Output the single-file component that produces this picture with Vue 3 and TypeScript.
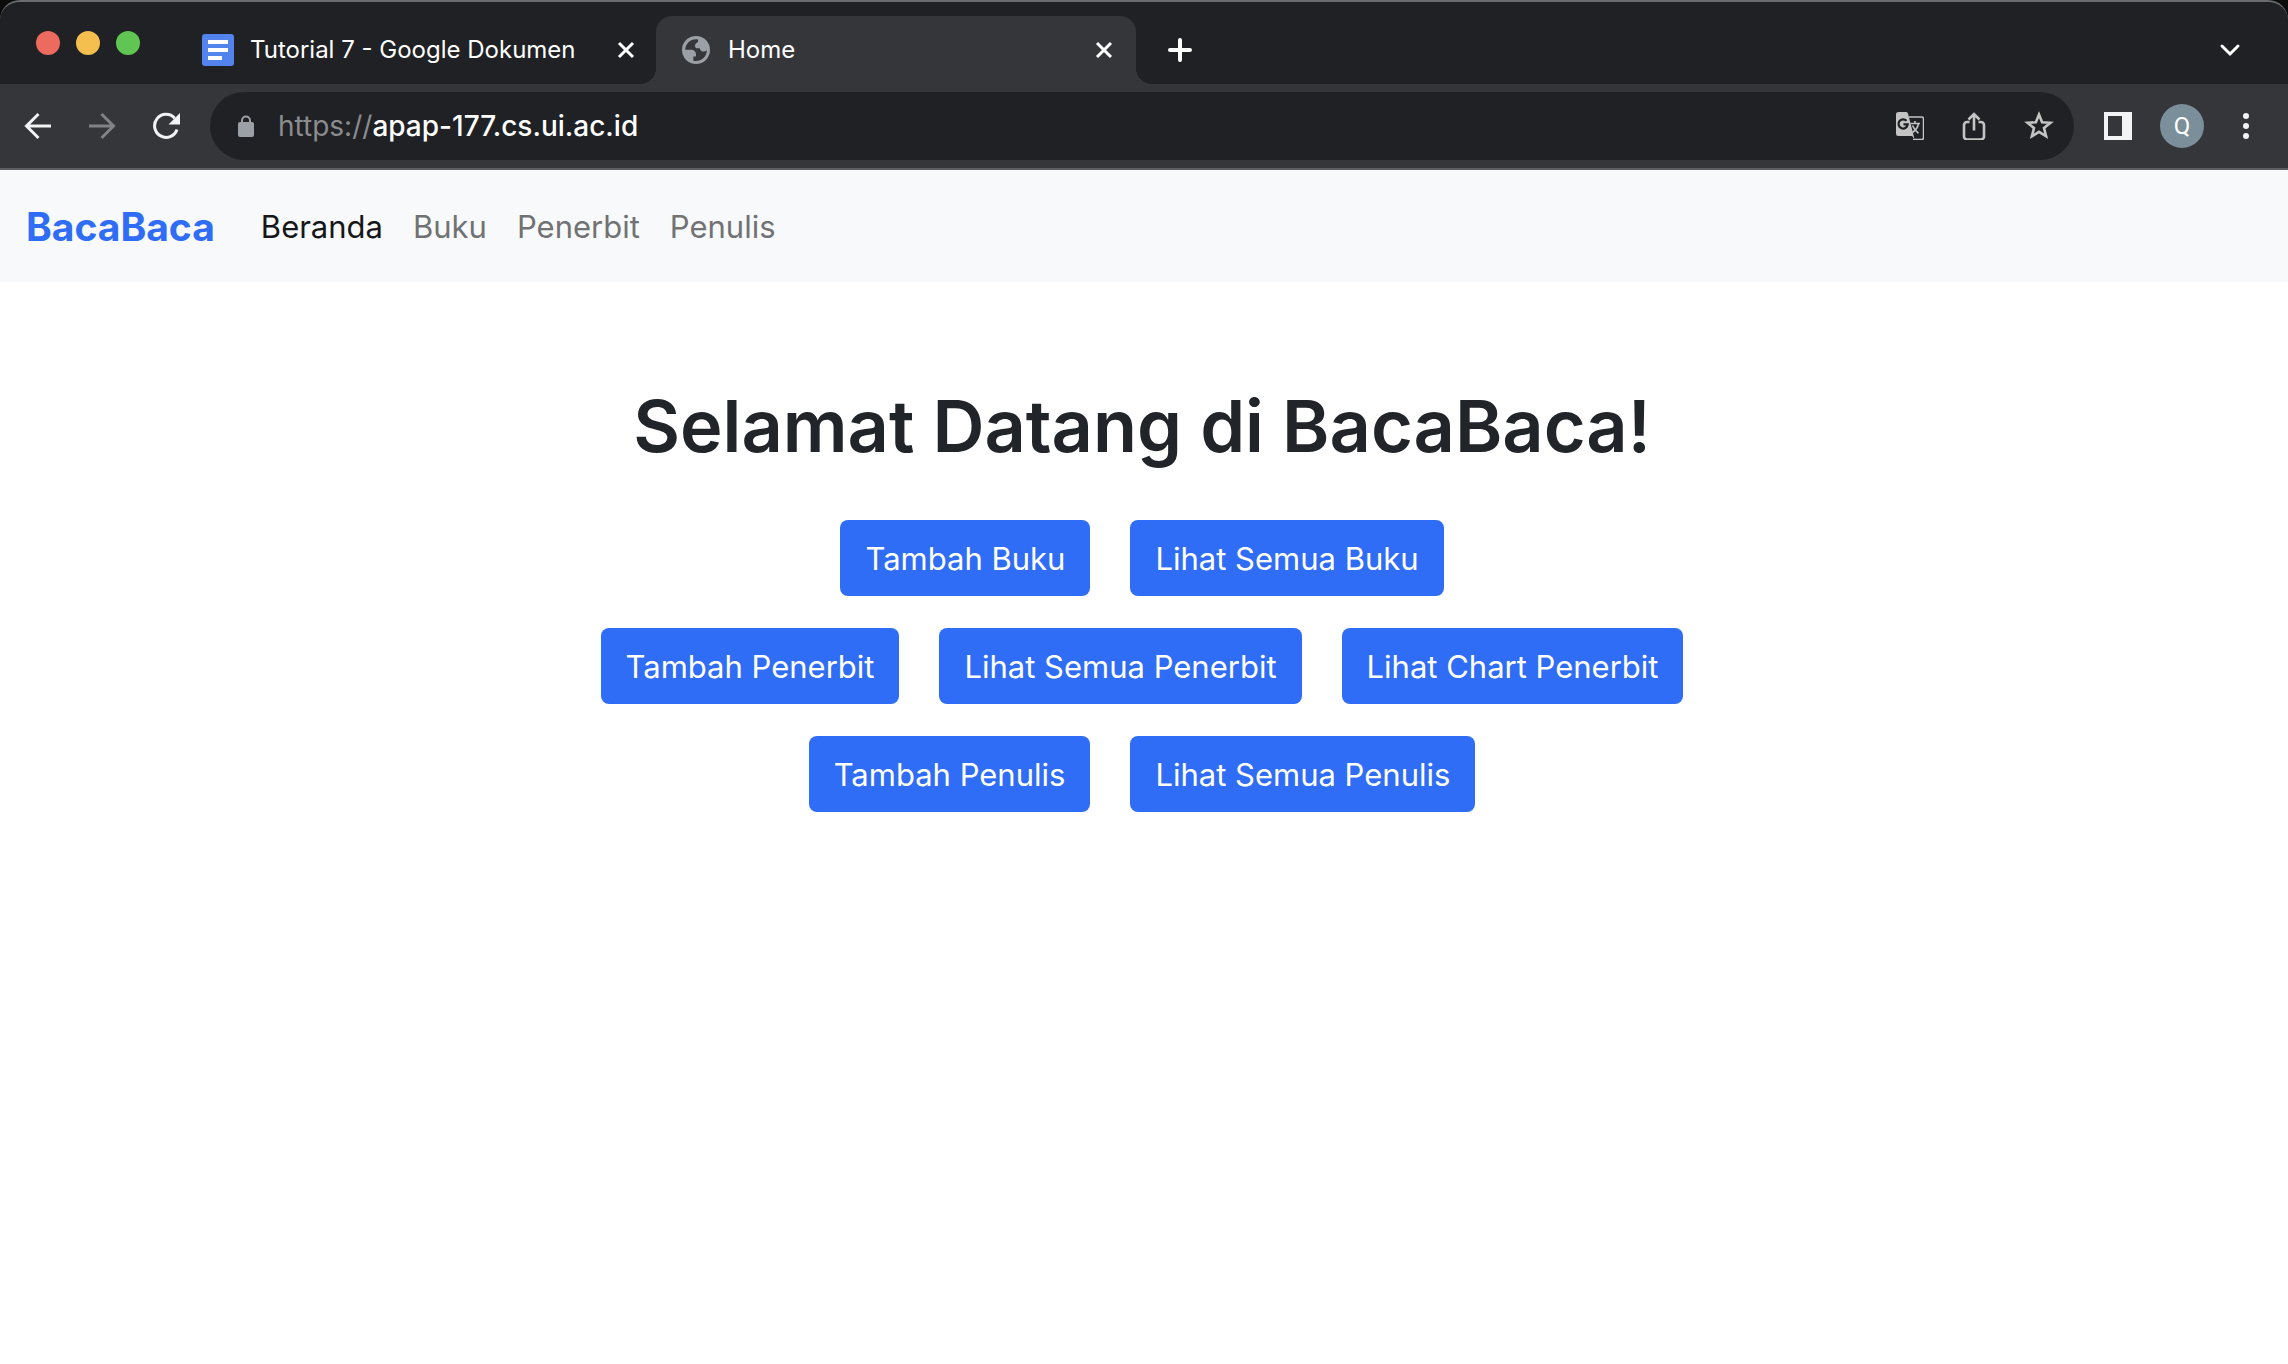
<script setup lang="ts">
import { ref } from 'vue'

interface NavLink {
  label: string
  active: boolean
}

const address = ref('apap-177.cs.ui.ac.id')

const navLinks: NavLink[] = [
  { label: 'Beranda', active: true },
  { label: 'Buku', active: false },
  { label: 'Penerbit', active: false },
  { label: 'Penulis', active: false },
]

const actionRows: string[][] = [
  ['Tambah Buku', 'Lihat Semua Buku'],
  ['Tambah Penerbit', 'Lihat Semua Penerbit', 'Lihat Chart Penerbit'],
  ['Tambah Penulis', 'Lihat Semua Penulis'],
]
</script>

<template>
  <div class="window">
    <header class="chrome">
      <div class="tab-strip">
        <div class="lights">
          <button class="light red" aria-label="Close window"></button>
          <button class="light yellow" aria-label="Minimise window"></button>
          <button class="light green" aria-label="Zoom window"></button>
        </div>
        <div class="tab">
          <svg class="tab-icon" width="32" height="32" viewBox="0 0 32 32">
            <rect width="32" height="32" rx="3" fill="#5383ec" />
            <path d="M6 6h20v4H6zM6 14h20v4H6zM6 22h14v4H6z" fill="#fff" />
          </svg>
          <span class="tab-title">Tutorial 7 - Google Dokumen</span>
          <button class="icon-button" aria-label="Close tab">
            <svg width="24" height="24" viewBox="0 0 24 24">
              <path d="M5 5l14 14M19 5L5 19" stroke="#fff" stroke-width="3" fill="none" />
            </svg>
          </button>
        </div>
        <div class="tab active">
          <svg class="tab-icon" width="32" height="32" viewBox="0 0 32 32">
            <circle cx="16" cy="16" r="14" fill="#9aa0a6" />
            <path
              d="M17.500 5.200C10.500 4.600 5.300 9.500 5.200 15.800H11c3 0 5 1.800 5 4.600v2.200h-2.600v4.100c7 1.500 13.200-3.600 13.500-10.300-1.300 1-2.900 1.400-4.500 1-1.500-.4-2.300-1.500-2.600-3.200h-3.600c-1.700-1.500-1.700-3.600.2-5.200 1.300-.4 2-1.500 1.600-3z"
              fill="#35363a"
            />
          </svg>
          <span class="tab-title">Home</span>
          <button class="icon-button" aria-label="Close tab">
            <svg width="24" height="24" viewBox="0 0 24 24">
              <path d="M5 5l14 14M19 5L5 19" stroke="#fff" stroke-width="3" fill="none" />
            </svg>
          </button>
        </div>
        <button class="icon-button new-tab" aria-label="New tab">
          <svg width="24" height="24" viewBox="0 0 24 24">
            <path d="M12 2v20M2 12h20" stroke="#fff" stroke-width="4" stroke-linecap="round" />
          </svg>
        </button>
        <button class="icon-button tab-search" aria-label="Search tabs">
          <svg width="24" height="24" viewBox="0 0 24 24">
            <path d="M4 8l8 8 8-8" stroke="#fff" stroke-width="3" stroke-linecap="round" fill="none" />
          </svg>
        </button>
      </div>

      <div class="toolbar">
        <button class="icon-button" aria-label="Back">
          <svg width="28" height="28" viewBox="0 0 28 28">
            <path d="M27 14H3M14.500 2L2.500 14l12 12" stroke="#f1f3f4" stroke-width="3" fill="none" />
          </svg>
        </button>
        <button class="icon-button" aria-label="Forward">
          <svg width="28" height="28" viewBox="0 0 28 28">
            <path d="M1 14h24M13.500 2l12 12-12 12" stroke="#818286" stroke-width="3" fill="none" />
          </svg>
        </button>
        <button class="icon-button" aria-label="Reload">
          <svg width="28" height="28" viewBox="0 0 28 28">
            <path d="M22.700 6.200A11.500 11.500 0 1 0 25 17.500" stroke="#f1f3f4" stroke-width="3" fill="none" />
            <path d="M28 1v11.500H16.500z" fill="#f1f3f4" />
          </svg>
        </button>
        <div class="omnibox">
          <svg class="lock" width="16" height="22" viewBox="0 0 16 22">
            <rect y="7" width="16" height="15" rx="2" fill="#9aa0a6" />
            <path d="M4 8V5.500a4 4 0 0 1 8 0V8" stroke="#9aa0a6" stroke-width="2" fill="none" />
          </svg>
          <label class="scheme" for="address">https://</label>
          <input id="address" v-model="address" class="address" type="text" spellcheck="false" />
          <button class="icon-button" aria-label="Translate this page">
            <svg width="28" height="28" viewBox="0 0 28 28">
              <path d="M13 5h12.500a2 2 0 0 1 2 2v18.500a2 2 0 0 1-2 2H17" stroke="#c4c4c4" stroke-width="1.500" fill="none" />
              <path d="M2.500 0H10a2 2 0 0 1 2 1.500L18.500 27 16 24H2.500A2.500 2.500 0 0 1 0 21.500v-19A2.500 2.500 0 0 1 2.500 0z" fill="#c4c4c4" />
              <path d="M14.500 11.500h9.500M19 9v2.500M22.500 11.500c-.8 4-3 7-6 9M16.500 13.500c1.200 3 3.200 5.500 6 7.800" stroke="#c4c4c4" stroke-width="1.600" fill="none" />
              <path d="M10.500 8.800A4.600 4.600 0 1 0 11.700 12.300H7.500" stroke="#202124" stroke-width="2.200" fill="none" />
            </svg>
          </button>
          <button class="icon-button" aria-label="Share this page">
            <svg width="28" height="28" viewBox="0 0 28 28">
              <path d="M9.500 10H7a3 3 0 0 0-3 3v11.500a3 3 0 0 0 3 3h14a3 3 0 0 0 3-3V13a3 3 0 0 0-3-3h-2.500M14 18.500V2.500M8.500 7.500L14 2l5.500 5.500" stroke="#c4c4c4" stroke-width="2.600" fill="none" />
            </svg>
          </button>
          <button class="icon-button" aria-label="Bookmark this page">
            <svg width="30" height="30" viewBox="0 0 30 30">
              <path d="M15 3.500l3.100 7.700 8.400.6-6.500 5.300 2.100 8.200L15 20.900l-7.100 4.400 2.100-8.200-6.500-5.300 8.400-.6z" stroke="#c4c4c4" stroke-width="2.600" fill="none" />
            </svg>
          </button>
        </div>
        <button class="icon-button side-panel" aria-label="Show side panel">
          <svg width="28" height="28" viewBox="0 0 28 28">
            <path d="M0 0h28v28H0zM4 4v20h14V4z" fill="#f1f3f4" fill-rule="evenodd" />
          </svg>
        </button>
        <button class="avatar" aria-label="Profile">Q</button>
        <button class="icon-button" aria-label="Menu">
          <svg width="28" height="28" viewBox="0 0 28 28" fill="#f1f3f4">
            <circle cx="14" cy="4" r="3" />
            <circle cx="14" cy="14" r="3" />
            <circle cx="14" cy="24" r="3" />
          </svg>
        </button>
      </div>
    </header>

    <nav class="navbar">
      <a class="brand" href="#">BacaBaca</a>
      <a
        v-for="link in navLinks"
        :key="link.label"
        class="nav-link"
        :class="{ active: link.active }"
        href="#"
      >{{ link.label }}</a>
    </nav>

    <main class="content">
      <h1 class="title">Selamat Datang di BacaBaca!</h1>
      <div v-for="(row, index) in actionRows" :key="index" class="row">
        <a v-for="label in row" :key="label" class="action" href="#">{{ label }}</a>
      </div>
    </main>
  </div>
</template>

<style>
html,
body,
#app {
  height: 100%;
}

body {
  margin: 0;
  background: #fff;
}
</style>

<style scoped>
.window {
  min-height: 100%;
  background: #fff;
  font-family: Inter, 'Liberation Sans', sans-serif;
}

.window * {
  box-sizing: border-box;
}

button {
  padding: 0;
  border: 0;
  background: none;
  font-family: inherit;
}

a {
  text-decoration: none;
}

svg {
  display: block;
}

.chrome {
  background: #0c0c0d;
  border-bottom: 2px solid #5f6064;
}

.tab-strip {
  display: flex;
  align-items: flex-end;
  height: 84px;
  padding-right: 46px;
  border-top: 2px solid #6b6c6f;
  border-radius: 20px 20px 0 0;
  background: #202124;
}

.lights {
  display: flex;
  gap: 16px;
  align-self: center;
  width: 140px;
  margin-left: 36px;
}

.light {
  width: 24px;
  height: 24px;
  border-radius: 50%;
}

.red {
  background: #ed6a5e;
}

.yellow {
  background: #f5bf4f;
}

.green {
  background: #61c554;
}

.tab {
  display: flex;
  align-items: center;
  width: 480px;
  height: 68px;
  padding: 0 18px 0 26px;
}

.tab.active {
  position: relative;
  padding: 0 20px 0 24px;
  border-radius: 16px 16px 0 0;
  background: #35363a;
}

.tab.active::before,
.tab.active::after {
  content: '';
  position: absolute;
  bottom: 0;
  width: 16px;
  height: 16px;
}

.tab.active::before {
  right: 100%;
  background: radial-gradient(circle at 0 0, #202124 16px, #35363a 16px);
}

.tab.active::after {
  left: 100%;
  background: radial-gradient(circle at 100% 0, #202124 16px, #35363a 16px);
}

.tab-title {
  flex: 1;
  margin-left: 16px;
  color: #fff;
  font-size: 24px;
  line-height: 32px;
  white-space: nowrap;
}

.icon-button {
  flex: none;
}

.new-tab {
  height: 68px;
  margin-left: 32px;
}

.tab-search {
  height: 68px;
  margin-left: auto;
}

.toolbar {
  display: flex;
  align-items: center;
  gap: 36px;
  height: 84px;
  padding: 0 28px 0 24px;
  background: #35363a;
}

.omnibox {
  display: flex;
  flex: 1;
  align-items: center;
  gap: 36px;
  height: 68px;
  margin-left: -6px;
  padding: 0 20px 0 28px;
  border-radius: 34px;
  background: #202124;
}

.scheme,
.address {
  font-size: 28px;
  line-height: 40px;
}

.scheme {
  margin-left: -12px;
  color: #8b8c8e;
}

.address {
  flex: 1;
  min-width: 0;
  margin-left: -36px;
  padding: 0;
  border: 0;
  outline: 0;
  background: none;
  color: #fff;
  font-family: inherit;
  font-weight: 500;
}

.side-panel {
  margin-left: -6px;
}

.avatar {
  width: 44px;
  height: 44px;
  margin: 0 -8px;
  border-radius: 50%;
  background: #7b8f9b;
  color: #fff;
  font-family: Roboto, sans-serif;
  font-size: 24px;
}

.navbar {
  display: flex;
  align-items: center;
  gap: 30px;
  height: 112px;
  padding: 0 26px;
  background: #f8f9fb;
}

.brand {
  margin-right: 16px;
  color: #306df6;
  font-size: 39px;
  font-weight: 700;
}

.nav-link {
  color: #717273;
  font-size: 31px;
}

.nav-link.active {
  color: #161718;
}

.content {
  display: flex;
  flex-direction: column;
  align-items: center;
  gap: 32px;
  padding: 96px 4px 96px 0;
}

.title {
  margin: 0 0 14px;
  color: #212529;
  font-size: 72px;
  font-weight: 600;
  line-height: 96px;
}

.row {
  display: flex;
  gap: 40px;
}

.action {
  padding: 15px 25px 13px;
  border-radius: 8px;
  background: #306df6;
  color: #fff;
  font-size: 31px;
  line-height: 48px;
}
</style>
